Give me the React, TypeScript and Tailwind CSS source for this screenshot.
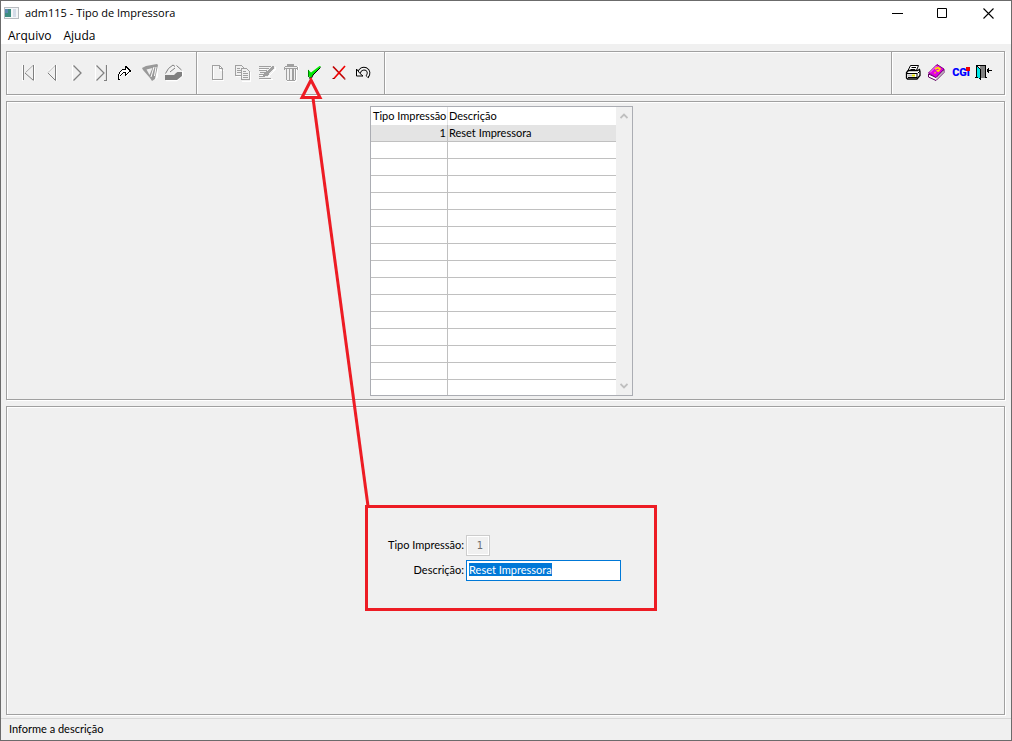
import { useEffect, useRef, type ReactNode } from "react";
import { clsx } from "clsx";

type IconProps = { children: ReactNode; smooth?: boolean };

function Icon({ children, smooth = false }: IconProps) {
  return (
    <svg
      viewBox="0 0 24 24"
      className="size-6"
      fill="none"
      shapeRendering={smooth ? "auto" : "crispEdges"}
      aria-hidden="true"
    >
      {children}
    </svg>
  );
}

const FirstIcon = () => (
  <Icon smooth>
    <path d="M6.5 4v16M17 4.5L9 12" stroke="#fff" />
    <path d="M7.5 4v15M17.5 4v15M9 12l8.5 7.5" stroke="#808080" />
    <path d="M17 4.5L9.5 11.5" stroke="#a8a8a8" />
    <path d="M18.5 4v16" stroke="#fff" />
  </Icon>
);

const PreviousIcon = () => (
  <Icon smooth>
    <path d="M15.5 4L8 11.5" stroke="#b0b0b0" />
    <path d="M15.5 4v15.5L8 12" stroke="#808080" />
    <path d="M16.5 4v16M8 10.5L14.5 4" stroke="#fff" />
  </Icon>
);

const NextIcon = () => (
  <Icon smooth>
    <path d="M8.5 4v15.5" stroke="#fff" />
    <path d="M9.5 4.5L17 12l-7.5 7.5" stroke="#808080" strokeWidth="1.3" />
  </Icon>
);

const LastIcon = () => (
  <Icon smooth>
    <path d="M7.5 4v15.5M19.5 4v16" stroke="#fff" />
    <path d="M8.5 4.5L16 12l-7.5 7.5M18.5 4v15.5H16" stroke="#808080" strokeWidth="1.2" />
  </Icon>
);

const GoToIcon = () => (
  <Icon>
    <path d="M6 18v-4l2-3 3-3h3V5l6 5-6 6v-3h-3l-3 3v3z" fill="#fff" />
    <path d="M8 18.5H6.5v-5l2-3 2-2h3v-3l5 4.5-5 4v-2.5h-2l-2 2-1 1.5" stroke="#000" />
    <path d="M13 5h2v1h1v1h1v1h1v1h1v2h-2v-2h-1V8h-1V7h-2z" fill="#000" />
  </Icon>
);

const FilterIcon = () => (
  <Icon smooth>
    <path d="M8 9l8 9 3 1 3-3V6z" fill="#fff" />
    <path d="M6 7l4-2 11-2 1 1-3 14-3 2-2-3-7-8z" fill="#999" />
    <path d="M10.5 8.5l6-1.5-3 7z" fill="#efefef" />
    <path d="M18 6l-3 10M18.5 15l1.500-9" stroke="#fff" />
  </Icon>
);

const ClearIcon = () => (
  <Icon smooth>
    <path d="M6 19.500h11l5.500-5V10" stroke="#fff" strokeWidth="1.500" />
    <path d="M5 14h9l3-3h5v4L17 19H5z" fill="#808080" />
    <path d="M5.500 13l3-5.500L13 4l2 1.500 1.500-1 5 4.500-5 2.500-2.500-2-3.500 3.500z" fill="#f2f2f2" />
    <path d="M5.500 12.500l3-5L13 4l2 1.500M16.500 4.500l5 4.500M10 11l5-4" stroke="#808080" />
  </Icon>
);

const NewIcon = () => (
  <Icon>
    <path d="M7.5 5v14.5H18M14.5 5v4H18" stroke="#fff" />
    <path d="M6.5 4.5h7l3 3v11h-10zM13.5 4.5v3h3" stroke="#a0a0a0" />
  </Icon>
);

const CopyIcon = () => (
  <Icon>
    <path d="M6 15.5h5M20.5 11v9h-9" stroke="#fff" />
    <path d="M5.5 4.5h6l2 2v8h-8zM7 7.5h3M7 9.5h4M7 11.5h4" stroke="#a0a0a0" />
    <path d="M11.5 7.5h5l3 3v8h-8z" fill="#f0f0f0" stroke="#a0a0a0" />
    <path d="M13 10.5h3M13 12.5h5M13 14.5h5M13 16.5h5" stroke="#a0a0a0" />
  </Icon>
);

const EditIcon = () => (
  <Icon>
    <path d="M6 18.5h13M6 8.5h6M6 14.5h5" stroke="#fff" />
    <path d="M5 5.5h12M5 7.5h10M5 9.5h8M6 11.5h6M5 13.5h5M5 15.5h4M5 17.5h12" stroke="#a0a0a0" />
    <path d="M18 5h2v2l-5 6-2 2-4 1 1-4 3-2z" fill="#a0a0a0" />
    <path d="M21.5 6v2l-7 8" stroke="#fff" />
  </Icon>
);

const TrashIcon = () => (
  <Icon>
    <path d="M9 20.5h9M18.5 8v12M20.5 5v4" stroke="#fff" />
    <path d="M7 5.5h12M9 3.5h7M6.5 6v3M19.5 6v3M7 7.5h12" stroke="#a0a0a0" />
    <path d="M8.5 8v10l1 1.5h7l1-1.5V8M11.5 8v11M14.5 8v11M15.5 8v11" stroke="#a0a0a0" />
    <path d="M9 4h7v1H9z" fill="#a0a0a0" />
  </Icon>
);

const ConfirmIcon = () => (
  <Icon smooth>
    <path d="M6 8.5l3 3L17.5 5 19 5.5 11 14l-2 3H7.5z" fill="#00e800" />
    <path d="M18.5 6.5L11 14l-1.5 3H7" stroke="#000" />
    <path d="M6.5 9v7" stroke="#008000" />
  </Icon>
);

const CancelIcon = () => (
  <Icon smooth>
    <path d="M7 5.5l11.5 12" stroke="#c00000" strokeWidth="1.7" />
    <path d="M19 5L8 17.5" stroke="#f00000" strokeWidth="1.7" />
    <path d="M6.5 17.5h2M18 18h1.5" stroke="#800000" />
  </Icon>
);

const UndoIcon = () => (
  <Icon smooth>
    <path d="M9 12c1-4 4-5 7-4 3 1.5 3.5 5 1 8" stroke="#000" strokeWidth="3.6" />
    <path d="M9 12c1-4 4-5 7-4 3 1.5 3.5 5 1 7.5" stroke="#f8f8f8" strokeWidth="1.7" />
    <path d="M6.5 8v7H13l-3-2.5z" fill="#f8f8f8" stroke="#000" />
  </Icon>
);

const PrintIcon = () => (
  <Icon smooth>
    <path d="M9.5 4.5h8l-2.5 6H6.5z" fill="#fff" stroke="#000" />
    <path d="M10.5 6.5h4.5M9.5 8.5h4.5" stroke="#000" />
    <path d="M5.5 11.5l2-2h9l2-1 .5 2v4L16 18H6.5l-1-1z" fill="#fff" stroke="#000" strokeWidth="1.3" />
    <path d="M6 12.5h10.5M7 16.5h9M16 12.5V17M17 12l2-2" stroke="#000" />
    <path d="M7 14.5h4" stroke="#c0c0c0" strokeWidth="2" />
    <path d="M11 14.5h3" stroke="#e0e000" strokeWidth="2" />
  </Icon>
);

const HelpIcon = () => (
  <Icon smooth>
    <path d="M3.5 13v3l7.5 3.5 8-8V8.5l-8 8z" fill="#fff" stroke="#600060" />
    <path d="M11.5 18l7-7.5" stroke="#b0b0b0" />
    <path d="M3.5 12L12 3.5l7 4.5-8 8.5z" fill="#e000e0" stroke="#800080" />
    <path d="M5 11.5L11.5 5" stroke="#ff90ff" />
    <path d="M10 8l3-1.5 2 1.5-1.5 2-2-.5M9.5 11.5l1 .5" stroke="#ffe000" strokeWidth="1.6" />
  </Icon>
);

const ExitIcon = () => (
  <Icon>
    <path d="M3.5 16.5V4.5h9v12M2 16.5h3M12 16.5h2" stroke="#000" />
    <path d="M7 5h5v12H7z" fill="#808080" />
    <path d="M4 5l3 2v12l-3-3z" fill="#00e8e8" />
    <path d="M4 5h1v1h1v1h1v1h1v11H7v-1H6v-1h1V8H6V7H5V6H4z" fill="#000" />
    <path d="M14 9.5h5M15.5 7v5M14.5 8v3" stroke="#000" />
  </Icon>
);

const CgiMark = () => (
  <span className="relative block font-['Roboto'] text-[11px] leading-6 font-black text-[#0000ff]">
    CGi
    <span className="absolute top-1.5 right-0 size-1 bg-[#f00000]" />
  </span>
);

type Tool = { label: string; icon: ReactNode; disabled?: boolean };

const navigationTools: Tool[] = [
  { label: "Primeiro", icon: <FirstIcon />, disabled: true },
  { label: "Anterior", icon: <PreviousIcon />, disabled: true },
  { label: "Próximo", icon: <NextIcon />, disabled: true },
  { label: "Último", icon: <LastIcon />, disabled: true },
  { label: "Ir para", icon: <GoToIcon /> },
  { label: "Filtrar", icon: <FilterIcon />, disabled: true },
  { label: "Limpar", icon: <ClearIcon />, disabled: true },
];

const recordTools: Tool[] = [
  { label: "Novo", icon: <NewIcon />, disabled: true },
  { label: "Copiar", icon: <CopyIcon />, disabled: true },
  { label: "Editar", icon: <EditIcon />, disabled: true },
  { label: "Excluir", icon: <TrashIcon />, disabled: true },
  { label: "Confirmar", icon: <ConfirmIcon /> },
  { label: "Cancelar", icon: <CancelIcon /> },
  { label: "Desfazer", icon: <UndoIcon /> },
];

const systemTools: Tool[] = [
  { label: "Imprimir", icon: <PrintIcon /> },
  { label: "Manual", icon: <HelpIcon /> },
  { label: "CGi", icon: <CgiMark /> },
  { label: "Sair", icon: <ExitIcon /> },
];

function ToolGroup({ tools, className }: { tools: Tool[]; className?: string }) {
  return (
    <div className={clsx("flex h-full items-center border-[#a0a0a0] pl-[9px]", className)}>
      {tools.map((tool) => (
        <button
          key={tool.label}
          type="button"
          title={tool.label}
          aria-label={tool.label}
          disabled={tool.disabled}
          className="flex size-6 items-center justify-center"
        >
          {tool.icon}
        </button>
      ))}
    </div>
  );
}

// Etched frame: grey line with a white one just below and to the right.
const groove = "border border-[#a0a0a0] shadow-[1px_1px_0_#fff,inset_1px_1px_0_#fff]";

const records = [{ id: 1, description: "Reset Impressora" }];
const rowCount = 16;

function RecordGrid() {
  const rows = Array.from({ length: rowCount }, (_, i) => records[i]);

  return (
    <div className="flex border border-[#abadb3] bg-white">
      <table className="w-[245px] table-fixed border-separate border-spacing-0 whitespace-nowrap">
        <thead>
          <tr className="h-[18px] text-left">
            <th className="w-[77px] border-r border-[#e3e3e3] p-0 pl-0.5 font-normal">Tipo Impressão</th>
            <th className="p-0 pl-px font-normal">Descrição</th>
          </tr>
        </thead>
        <tbody>
          {rows.map((row, idx) => {
            const isLast = idx === rowCount - 1;
            return (
              <tr key={idx} className={clsx(isLast ? "h-[15px]" : "h-[17px]", row && "bg-[#e4e4e4]")}>
                <td className={clsx("border-r border-[#c0c0c0] p-0 pr-px text-right", !isLast && "border-b")}>
                  {row?.id}
                </td>
                <td className={clsx("border-[#c0c0c0] p-0 pl-px", !isLast && "border-b")}>
                  {row?.description}
                </td>
              </tr>
            );
          })}
        </tbody>
      </table>
      <div className="flex w-4 flex-col items-center justify-between bg-[#f0f0f0] py-1.5">
        <svg viewBox="0 0 8 6" className="h-1.5 w-2" aria-hidden="true">
          <path d="M.5 5L4 1.5 7.5 5" fill="none" stroke="#bfbfbf" strokeWidth="1.8" />
        </svg>
        <svg viewBox="0 0 8 6" className="h-1.5 w-2" aria-hidden="true">
          <path d="M.5 1L4 4.5 7.5 1" fill="none" stroke="#bfbfbf" strokeWidth="1.8" />
        </svg>
      </div>
    </div>
  );
}

function RecordForm() {
  const descriptionRef = useRef<HTMLInputElement>(null);

  useEffect(() => {
    descriptionRef.current?.focus();
    descriptionRef.current?.select();
  }, []);

  return (
    <form className="grid grid-cols-[auto_auto] items-center gap-x-0.5 gap-y-1">
      <label htmlFor="tipo" className="text-right">
        Tipo Impressão:
      </label>
      <input
        id="tipo"
        disabled
        defaultValue="1"
        className="h-[21px] w-6 border border-[#cccccc] bg-[#f0f0f0] pr-1.5 text-right font-['DejaVu_Sans'] text-[10px] text-[#6d6d6d] shadow-[inset_0_0_0_1px_#fff]"
      />
      <label htmlFor="descricao" className="text-right">
        Descrição:
      </label>
      <input
        id="descricao"
        ref={descriptionRef}
        defaultValue="Reset Impressora"
        className="h-[21px] w-[155px] border border-[#0078d7] bg-white pr-1 pb-0.5 pl-0.5 outline-1 -outline-offset-1 outline-[#0078d7] outline-solid selection:bg-[#0078d7] selection:text-white"
      />
    </form>
  );
}

function TitleBar() {
  return (
    <header className="flex h-6 items-center bg-white font-['Open_Sans',sans-serif] leading-6">
      <svg viewBox="0 0 15 12" className="ml-[3px] h-3 w-[15px]" aria-hidden="true">
        <path d="M0 0h15v12H0z" fill="#b8bcc0" />
        <path d="M1 1h13v10H1z" fill="#f4f6f8" />
        <path d="M1 2h6v8H1z" fill="#3c8c80" />
        <path d="M1 2h3v4H1z" fill="#5a88b0" />
        <path d="M9 2h3v8H9z" fill="#d4dce8" />
      </svg>
      <h1 className="ml-1.5">adm115 - Tipo de Impressora</h1>
      <div className="ml-auto flex">
        <button type="button" aria-label="Minimizar" className="flex h-6 w-[45px] items-center justify-center">
          <svg viewBox="0 0 11 11" className="size-[11px]" aria-hidden="true">
            <path d="M0 5.5h11" stroke="#000" />
          </svg>
        </button>
        <button type="button" aria-label="Maximizar" className="flex h-6 w-[45px] items-center justify-center">
          <svg viewBox="0 0 11 11" className="size-[11px]" aria-hidden="true">
            <path d="M.5.5h9v9h-9z" fill="none" stroke="#000" />
          </svg>
        </button>
        <button type="button" aria-label="Fechar" className="flex h-6 w-[46px] items-center justify-center">
          <svg viewBox="0 0 11 11" className="size-[11px]" aria-hidden="true">
            <path d="M.5.5l10 10M10.5.5l-10 10" stroke="#000" strokeWidth="1.1" />
          </svg>
        </button>
      </div>
    </header>
  );
}

// Red callout: frames the form and points up at the confirm button.
function Callout() {
  return (
    <svg
      className="pointer-events-none absolute top-0 left-0 h-full w-full"
      fill="none"
      stroke="#ed1c24"
      strokeWidth="3"
      aria-hidden="true"
    >
      <path d="M310 79l-9 17.5h18z" />
      <path d="M312 97l55 408" />
      <path d="M365.5 505.5h289v103h-289z" />
    </svg>
  );
}

export default function App() {
  return (
    <div className="relative flex h-screen flex-col border border-[#6b6b6b] bg-[#f0f0f0] font-['Lato',sans-serif] text-[11px] leading-4 text-black">
      <TitleBar />
      <nav className="flex h-[19px] items-end gap-3 bg-white pl-[7px] font-['Open_Sans',sans-serif] text-[12px]">
        <button type="button">Arquivo</button>
        <button type="button">Ajuda</button>
      </nav>

      <main className="flex flex-1 flex-col gap-1.5 pt-[7px] pr-1.5 pb-[3px] pl-[5px]">
        <div className={clsx("flex h-11 items-center", groove)}>
          <ToolGroup tools={navigationTools} className="border-r pr-3" />
          <ToolGroup tools={recordTools} className="border-r pr-2.5 shadow-[1px_0_0_#fff,inset_1px_0_0_#fff]" />
          <ToolGroup tools={systemTools} className="ml-auto border-l pr-[7px] shadow-[inset_1px_0_0_#fff]" />
        </div>
        <section className={clsx("flex justify-center pt-1 pr-2 pb-[3px]", groove)}>
          <RecordGrid />
        </section>
        <section className={clsx("flex flex-1 items-center justify-center pr-0.5 pb-1.5", groove)}>
          <RecordForm />
        </section>
      </main>

      <footer className="flex h-[22px] items-center border-t border-[#d7d7d7] pb-0.5 pl-2">
        Informe a descrição
      </footer>
      <Callout />
    </div>
  );
}
